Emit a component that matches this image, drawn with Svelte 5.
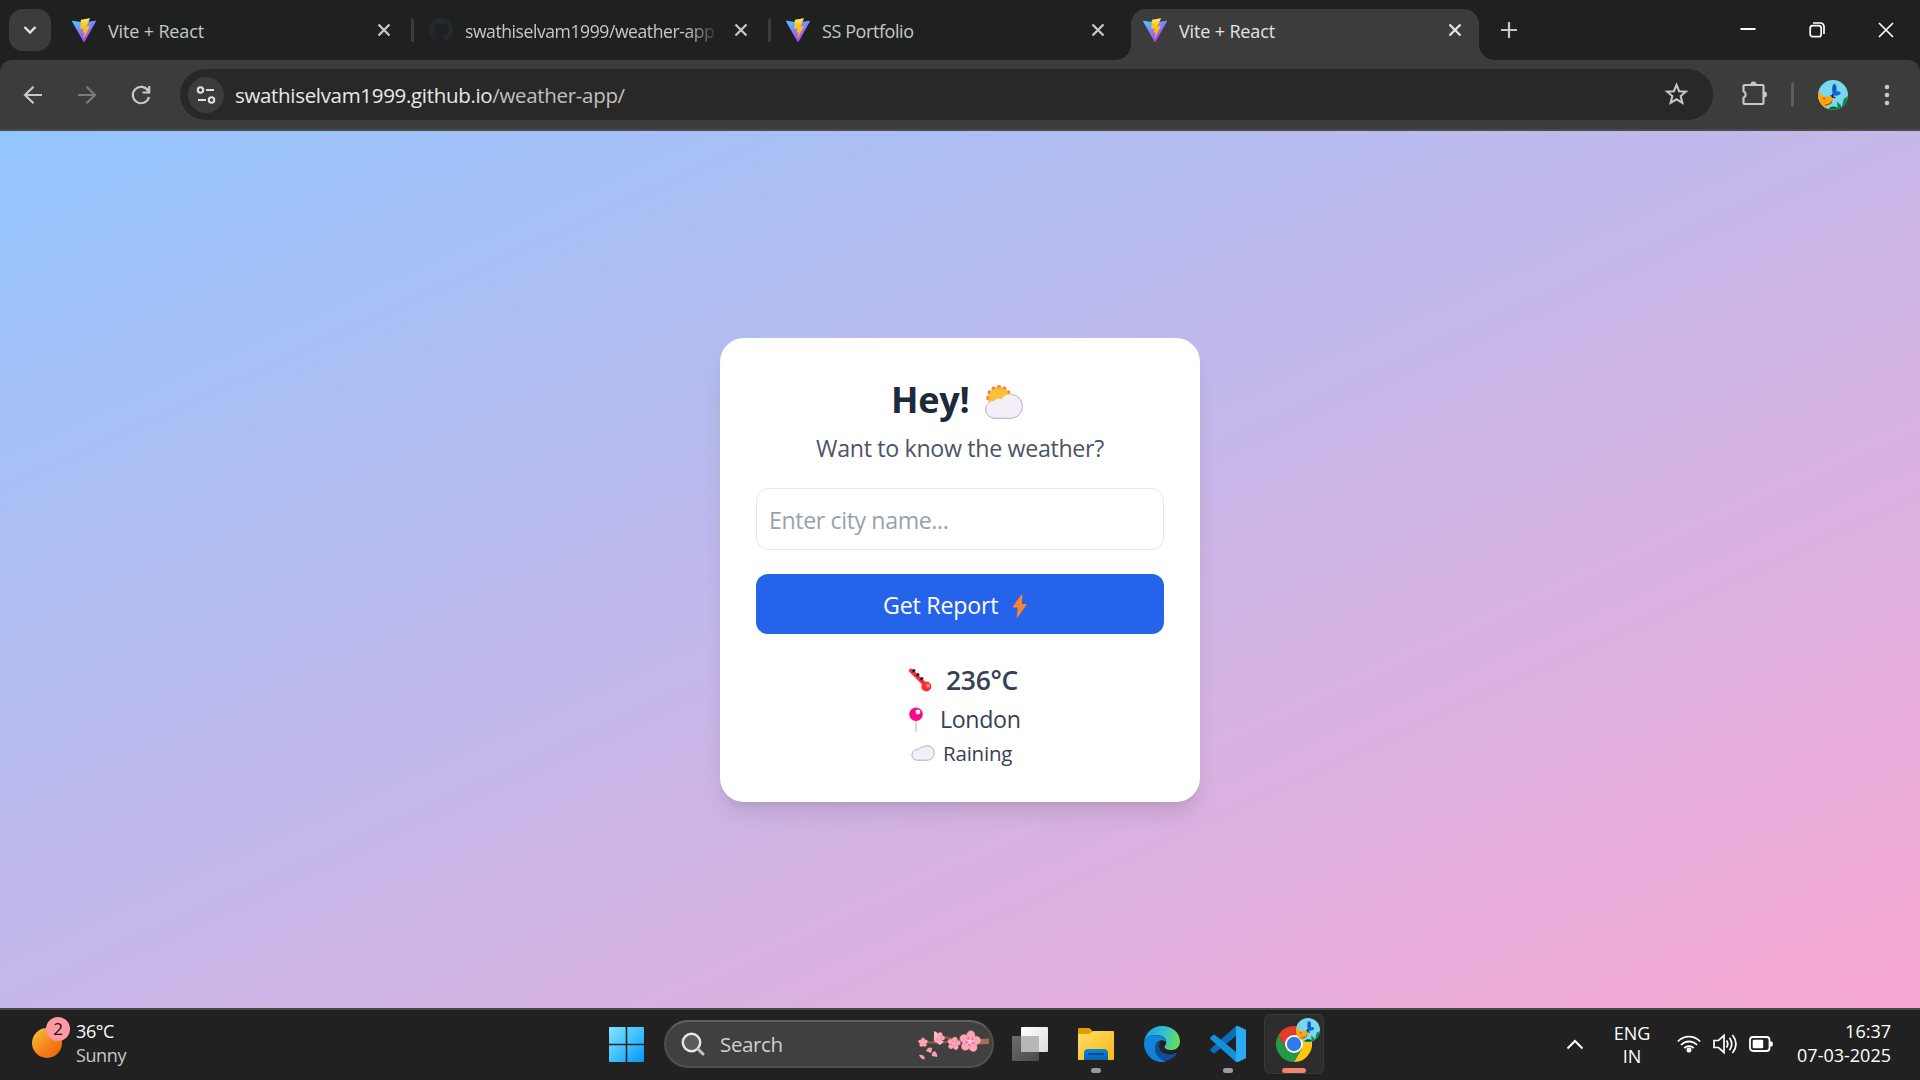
<script>
  let city = $state('');
  const tabs = [
    { title: 'Vite + React', icon: 'vite' },
    { title: 'swathiselvam1999/weather-app', icon: 'github' },
    { title: 'SS Portfolio', icon: 'vite' },
    { title: 'Vite + React', icon: 'vite', active: true }
  ];
  const petals = [0, 72, 144, 216, 288];
  const rays = [0, 30, 60, 90, 120, 150, 180, 210, 240, 270, 300, 330];
</script>

{#snippet vite()}
  <svg class="fav" viewBox="0 0 24 24">
    <defs>
      <linearGradient id="va" x1="0" y1="0" x2=".6" y2="1"><stop offset="0" stop-color="#41d1ff" /><stop offset="1" stop-color="#bd34fe" /></linearGradient>
      <linearGradient id="vb" x1="0" y1="0" x2="0" y2="1"><stop offset="0" stop-color="#ffea83" /><stop offset=".3" stop-color="#ffcb1f" /><stop offset="1" stop-color="#ffa800" /></linearGradient>
    </defs>
    <path fill="url(#va)" d="M23.9 3.6 12.6 23.7a.6.6 0 0 1-1.1 0L.1 3.6a.6.6 0 0 1 .7-.9L12 4.6l11.200-1.900a.6.6 0 0 1 .7.9z" />
    <path fill="url(#vb)" d="M17.500.2 9.100 1.800a.4.4 0 0 0-.3.3L8.300 10.700a.4.4 0 0 0 .4.400l2.300-.5a.4.4 0 0 1 .4.400l-.7 3.400a.4.4 0 0 0 .5.400l1.400-.4-1.100 5.300c-.1.4.4.5.6.2l5.600-11.300a.4.4 0 0 0-.4-.5l-2.400.5a.4.4 0 0 1-.4-.5L18 .6a.4.4 0 0 0-.5-.4z" />
  </svg>
{/snippet}

{#snippet blossom()}
  {#each petals as a}
    <ellipse cx="0" cy="-5.600" rx="4" ry="4.800" transform="rotate({a})" fill="#ffa6b4" stroke="#f58ca0" stroke-width=".5" />
  {/each}
  <circle r="4.500" fill="#ff7892" />
  {#each petals as a}
    <path d="M0 0V-4.500" transform="rotate({a})" stroke="#ffe3f3" stroke-width="1" />
  {/each}
  <circle r="1.600" fill="#e9c9ff" />
{/snippet}

{#snippet avatar()}
  <defs><clipPath id="av"><circle cx="15" cy="15" r="15" /></clipPath></defs>
  <g clip-path="url(#av)">
    <rect width="30" height="30" fill="#78d8ee" />
    <path d="M0 30V11.500l2 .5 1.500 3.500 4.500 1 6 0 1.500 3-2.500 4-4 2-1 5z" fill="#ffa50a" />
    <path d="M7 25q5 0 7-3.500" stroke="#8a4a10" stroke-width="1.200" fill="none" />
    <path d="M9.500 30q2-4 7-3.500l3 1-.5-6 4 4 .5 2 2.500-9 5-3v15z" fill="#0b8b45" />
    <path d="M12 29q3-3 6 0" stroke="#044d31" stroke-width="1.500" fill="none" />
    <path d="M15 15.500q-2.500-9 1-12 3.500 1 2.500 8 4.500-1 4 2.500-2.500 2.500-7.500 1.500z" fill="#1264d8" />
    <path d="M16 6q1.500 2 .5 5" stroke="#0a3fa0" fill="none" />
    <path d="m12.500 15.500 5 2.500m-3-4v4" stroke="#13284c" stroke-width="1.300" />
    <circle cx="6" cy="18.500" r=".8" fill="#3b3d50" />
  </g>
{/snippet}

<div class="screen">
  <header class="tabs">
    <button class="tabsearch" aria-label="Search tabs"><svg width="14" height="10" viewBox="0 0 14 10"><path d="m1.500 2 5.500 5.500L12.500 2" fill="none" stroke="#e3e3e3" stroke-width="2.400" /></svg></button>
    <div class="tablist">
      {#each tabs as tab, i}
        <div class="tab" class:active={tab.active} class:divided={i < 2}>
          {#if tab.icon === 'vite'}{@render vite()}{:else}
            <svg class="fav" viewBox="0 0 16 16"><path fill="#24292f" d="M8 0C3.580 0 0 3.580 0 8c0 3.540 2.290 6.530 5.470 7.590.4.070.55-.17.55-.38 0-.19-.01-.82-.01-1.490-2.010.37-2.530-.49-2.690-.94-.09-.23-.48-.94-.82-1.130-.28-.15-.68-.52-.01-.53.63-.01 1.080.58 1.230.82.72 1.210 1.870.87 2.330.66.07-.52.28-.87.51-1.070-1.780-.2-3.640-.89-3.640-3.950 0-.87.31-1.590.82-2.150-.08-.2-.36-1.020.08-2.120 0 0 .67-.21 2.200.82.64-.18 1.320-.27 2-.27s1.360.09 2 .27c1.530-1.040 2.200-.82 2.200-.82.44 1.100.16 1.920.08 2.120.51.56.82 1.270.82 2.150 0 3.070-1.870 3.750-3.650 3.950.29.25.54.73.54 1.480 0 1.070-.01 1.930-.01 2.200 0 .21.15.46.55.38A8.010 8.010 0 0 0 16 8c0-4.420-3.580-8-8-8z" /></svg>
          {/if}
          <span class="title" class:fade={i === 1} class:tight={i === 2}>{tab.title}</span>
          <svg class="close" viewBox="0 0 14 14"><path d="m1.500 1.500 11 11m0-11-11 11" stroke="currentColor" stroke-width="2.300" /></svg>
        </div>
      {/each}
    </div>
    <svg class="plus" viewBox="0 0 16 16"><path d="M8 0v16M0 8h16" stroke="#c7c7c7" stroke-width="2.200" /></svg>
    <div class="winctl">
      <svg viewBox="0 0 16 16"><path d="M.5 7h15" stroke="#fff" stroke-width="2" /></svg>
      <svg viewBox="0 0 16 16"><rect x="1.200" y="3.700" width="11" height="11" rx="2.500" fill="none" stroke="#fff" stroke-width="1.700" /><path d="M4 1h7.500a3.500 3.500 0 0 1 3.500 3.500v7.500" fill="none" stroke="#fff" stroke-width="1.700" /></svg>
      <svg viewBox="0 0 16 16"><path d="m1 1 14 14m0-14L1 15" stroke="#fff" stroke-width="1.700" /></svg>
    </div>
  </header>

  <nav class="toolbar">
    <svg class="nav" viewBox="0 0 24 24"><path d="M21 12H4.500m8-8.300L4 12l8.500 8.300" fill="none" stroke="#c7c7c7" stroke-width="2.200" /></svg>
    <svg class="nav" viewBox="0 0 24 24"><path d="M3 12h16.500m-8-8.300L20 12l-8.500 8.300" fill="none" stroke="#7b7b7b" stroke-width="2.200" /></svg>
    <svg class="nav" viewBox="0 0 24 24"><path d="M19.200 8A8.200 8.200 0 1 0 20 14M20.200 3v6.500h-6.700" fill="none" stroke="#c7c7c7" stroke-width="2.200" /></svg>
    <div class="omnibox">
      <span class="site"><svg width="20" height="20" viewBox="0 0 20 20" fill="none" stroke="#e0e0e0" stroke-width="2.100"><circle cx="4.500" cy="5" r="2.700" /><path d="M10 5h8M2 15h8" /><circle cx="15.500" cy="15" r="2.700" /></svg></span>
      <span class="url">swathiselvam1999.github.io<i>/weather-app/</i></span>
      <svg class="star" viewBox="0 0 24 24"><path d="m12 2.800 2.500 6 6.500.5-5 4.200 1.600 6.500-5.600-3.400L6.400 20 8 13.500 3 9.300l6.500-.5z" fill="none" stroke="#c7c7c7" stroke-width="2" /></svg>
    </div>
    <svg class="puzzle" viewBox="0 0 26 26"><path d="M3.500 5h18a1 1 0 0 1 1 1v17a1 1 0 0 1-1 1h-18a1 1 0 0 1-1-1v-5.200a3.600 3.600 0 0 0 0-6.600V6a1 1 0 0 1 1-1z" fill="none" stroke="#c7c7c7" stroke-width="2.200" /><path d="M9.500 4.500a3 3 0 0 1 6 0zM23 11.500a3 3 0 0 1 0 6z" fill="#c7c7c7" /></svg>
    <span class="bar"></span>
    <svg class="me" viewBox="0 0 30 30">{@render avatar()}</svg>
    <svg class="dots" viewBox="0 0 6 24" fill="#c7c7c7"><circle cx="3" cy="4" r="2.300" /><circle cx="3" cy="12" r="2.300" /><circle cx="3" cy="20" r="2.300" /></svg>
  </nav>

  <main>
    <section class="card">
      <h1><span>Hey!</span>
        <svg width="38" height="34" viewBox="0 0 38 34">
          {#each rays as a}
            <circle cx="14" cy="2.300" r="2.200" transform="rotate({a} 14 13)" fill="#ff822d" />
          {/each}
          <circle cx="14" cy="13" r="10.400" fill="#f9c23c" stroke="#ff9a33" stroke-width=".6" />
          <path d="M10 33.300a9.300 9.300 0 0 1-9.300-9.300c0-5 4-8.500 8.300-7.800 1.600-2.800 4.600-3.200 7-1.800 2.500-3.300 5.500-4.800 9-4.800 6.600 0 12.300 5.200 12.300 11.900S32 33.300 25.500 33.300z" fill="#f3eef8" /><path d="M1.800 19.500C.2 22 .2 26 1.800 28.800c1.700 2.900 4.700 4.500 8.200 4.500h15.500c6.500 0 11.800-5.200 11.800-11.800 0-6.700-5-11.900-11.300-11.900" fill="none" stroke="#b4acbc" stroke-width="1" /></svg>
      </h1>
      <p class="sub">Want to know the weather?</p>
      <input placeholder="Enter city name..." bind:value={city} />
      <button class="get"><span>Get Report</span><svg width="15" height="24" viewBox="0 0 15 24"><path d="M9.500.5 1 12.200c-.5.700-.2 1.300.5 1.300h4.200L4.800 23c0 .7.600.8 1 .3l8.400-12c.5-.7.1-1.300-.5-1.300H9.800L10.400.8c0-.6-.5-.8-.9-.3z" fill="#ff822d" /></svg></button>
      <div class="result">
        <p class="temp"><svg width="24" height="24" viewBox="0 0 24 24"><path d="m3 2.500 14 14" stroke="#f92f35" stroke-width="4" stroke-linecap="round" /><path d="m4.800 4 2-2.300M8.800 8l2-2.300M12.800 12l2-2.300" stroke="#201c20" stroke-width="2.600" /><circle cx="18.300" cy="18.500" r="5" fill="#f92f35" /><circle cx="20" cy="17.700" r="2" fill="#ff8687" /></svg><span>236°C</span></p>
        <p class="place"><svg width="14" height="25" viewBox="0 0 14 25"><path d="M7 12v12" stroke="#d3d3d3" stroke-width="1.800" stroke-linecap="round" /><circle cx="7" cy="7.200" r="6.800" fill="#f70a8d" /><circle cx="9" cy="5" r="2.400" fill="#fff" /></svg><span>London</span></p>
        <p class="sky"><svg width="24" height="16" viewBox="0 0 24 16"><path d="M6 15.200a5 5 0 0 1-5-5C1 6.500 4 4 7.200 4.300 8.500 2.600 10 2 11.800 2.300 13 1.200 14.500.7 16.400.7c3.800 0 6.800 3.200 6.800 7.200 0 4-3.200 7.300-7 7.300z" fill="#f3eef8" stroke="#b4acbc" stroke-width="1" /></svg><span>Raining</span></p>
      </div>
    </section>
  </main>

  <footer class="taskbar">
    <div class="weather">
      <div class="sun"><b>2</b></div>
      <div class="wtext"><span>36°C</span><span class="dim">Sunny</span></div>
    </div>
    <div class="apps">
      <svg class="win" width="35" height="35" viewBox="0 0 35 35"><defs><linearGradient id="wg" x1="0" y1="0" x2="35" y2="35" gradientUnits="userSpaceOnUse"><stop stop-color="#86e2ff" /><stop offset=".5" stop-color="#3fc3fb" /><stop offset="1" stop-color="#0a94fb" /></linearGradient></defs><path fill="url(#wg)" d="M1 0h15.700v16.700H0V1a1 1 0 0 1 1-1zM18.300 0H34a1 1 0 0 1 1 1v15.700H18.300zM0 18.300h16.700V35H1a1 1 0 0 1-1-1zM18.300 18.300H35V34a1 1 0 0 1-1 1H18.300z" /></svg>
      <div class="search">
        <svg width="24" height="24" viewBox="0 0 24 24"><circle cx="10.500" cy="10.500" r="8.700" fill="#5a5a5a" stroke="#e6e6e6" stroke-width="2.400" /><path d="m17 17 5 5" stroke="#c4c4c4" stroke-width="3" stroke-linecap="round" /></svg>
        <span>Search</span>
        <svg class="bloom" width="72" height="32" viewBox="0 0 72 32">
          <path d="M71 11.500 52 13 30 8 22 6M40 9 24 13 5 12" fill="none" stroke="#8f5e48" stroke-width="2" />
          <path d="M50 10 71 8.500v5.500l-21 1z" fill="#a66c5c" />
          <g transform="translate(5 12.500) scale(.46)">{@render blossom()}</g>
          <g transform="translate(21 8) rotate(20) scale(.56)">{@render blossom()}</g>
          <path d="M16 1q5 2 5 5l-5 4zM17 11l5 4 4-4z" fill="#ffb9c8" />
          <g transform="translate(36 13.500) rotate(10) scale(.64)">{@render blossom()}</g>
          <g transform="translate(52 11.500) rotate(8) scale(1.040)">{@render blossom()}</g>
          <path d="M1 25q5-1 6 4-4 1-6-4zM8 21q2-5 6-3 0 3-1 5zM14 26q-1-4 3-5 3 4 2 6z" fill="#ff9daf" />
        </svg>
      </div>
      <svg class="tv" width="36" height="34" viewBox="0 0 36 34"><defs><linearGradient id="t1" x1="0" y1="0" x2="1" y2="1"><stop stop-color="#fff" /><stop offset="1" stop-color="#dcdcdc" /></linearGradient><linearGradient id="t2" x1="0" y1="0" x2="1" y2="1"><stop stop-color="#6c6c6c" /><stop offset="1" stop-color="#4b4b4b" /></linearGradient></defs><rect y="9" width="27" height="25" rx="1" fill="url(#t2)" /><rect x="9" width="27" height="25" rx="1" fill="url(#t1)" /><path d="M9 9h18v16H9z" fill="#b7b7b7" /></svg>
      <div class="app"><svg width="36" height="36" viewBox="0 0 36 36"><defs><linearGradient id="f1" x1="0" y1="0" x2="1" y2="1"><stop stop-color="#ffdc6b" /><stop offset="1" stop-color="#fcb912" /></linearGradient><linearGradient id="f2" x1="0" y1="0" x2="0" y2="1"><stop stop-color="#0f84d9" /><stop offset="1" stop-color="#0a62b4" /></linearGradient></defs><path d="M0 3a1 1 0 0 1 1-1h9.500c1 0 1.500.4 2 1l3 3V12H0z" fill="#e19d00" /><path d="M0 9q0-1 1-1h9.500q1 0 2-1l1.500-1.300q.7-.7 2-.7h19a1 1 0 0 1 1 1v27a1 1 0 0 1-1 1H1a1 1 0 0 1-1-1z" fill="url(#f1)" /><path d="M6 34v-7a4 4 0 0 1 4-4h16a4 4 0 0 1 4 4v7z" fill="url(#f2)" /><path d="M11 28h14" stroke="#064b91" stroke-width="2" stroke-linecap="round" /></svg><i class="run"></i></div>
      <div class="app"><svg width="36" height="36" viewBox="0 0 36 36"><defs><linearGradient id="e1" x1="0" y1=".3" x2="1" y2=".5"><stop stop-color="#1b9de2" /><stop offset=".55" stop-color="#35c1d1" /><stop offset="1" stop-color="#67e052" /></linearGradient><linearGradient id="e2" x1="0" y1="0" x2=".3" y2="1"><stop stop-color="#1487d8" /><stop offset="1" stop-color="#1180dc" /></linearGradient><linearGradient id="e3" x1="0" y1="0" x2="1" y2="1"><stop stop-color="#0d4b8d" /><stop offset="1" stop-color="#104f9c" /></linearGradient></defs><path d="M0 17C.5 7 8.500 0 18 0c10.500 0 18 7 18 15.500 0 5-4 8.500-8.500 8.500-4.500 0-7-1.500-7-3 0-1 1.800-1.700 1.800-5C22.300 11.500 17 9 11.500 9 5 9 1 12.500 0 17z" fill="url(#e1)" /><path d="M0 17c1-5 5-8 11-8 6.500 0 11 3.500 11 7-2-2-4-2-6-1.500-4 1.500-5.500 5.500-4.500 10 1.200 6 6 10 11 10.500C20 36 18 36 16 36 7 35 0 27.500 0 17z" fill="url(#e2)" /><path d="M14.500 15.500c-4 3-4.500 9-1.500 13.500 2.500 4 6 6 9 6 4-1 8-3.500 10.500-7 .5-.8 0-1.300-.8-.9-1.700.8-3.700 1.400-6 1.400-6 0-10.700-4-10.700-8.500 0-1.800.5-3.500 1.500-5z" fill="url(#e3)" /></svg></div>
      <div class="app"><svg width="36" height="36" viewBox="0 0 36 36"><path d="M26 0 36 4v28l-10 4z" fill="#24a9f2" /><path d="M26 0v10L5 27q-1 .8-2 0l-2.400-2.200q-1-1 0-2z" fill="#0a6fb8" /><path d="M26 36V26L5 9q-1-.8-2 0L.6 11.200q-1 1 0 2z" fill="#1590db" /><path d="M26 0q1.500-.3 2 0l8 4v28l-8 4h-2q1 0 1-2V2q0-2-1-2z" fill="#2aacf5" /></svg><i class="run"></i></div>
      <div class="app current"><svg width="36" height="36" viewBox="0 0 36 36"><path d="M18 18 2.400 9A18 18 0 0 1 33.600 9z" fill="#e33b2e" /><path d="M18 9h15.600A18 18 0 0 1 18 36l7.800-13.500z" fill="#fdc70c" /><path d="M10.200 22.500 2.400 9A18 18 0 0 0 18 36l7.800-13.500z" fill="#239847" /><path d="M2.400 9 10.200 22.500 18 9z" fill="#e33b2e" /><circle cx="18" cy="18" r="9" fill="#fff" /><circle cx="18" cy="18" r="7.200" fill="#2f7bea" /></svg><svg class="mini" viewBox="0 0 30 30">{@render avatar()}</svg><i class="run wide"></i></div>
    </div>
    <div class="tray">
      <svg class="chev" width="18" height="11" viewBox="0 0 18 11"><path d="m1.500 9.500 7.500-7.500 7.500 7.500" fill="none" stroke="#fff" stroke-width="2" /></svg>
      <div class="lang"><span>ENG</span><span>IN</span></div>
      <div class="status">
        <svg viewBox="0 0 24 24" fill="none" stroke="#fff" stroke-width="1.800"><path d="M.8 9.500c6.200-6.500 16.200-6.500 22.400 0M4 13c4.500-4.700 11.500-4.700 16 0M7.300 16.200c2.600-2.900 6.800-2.900 9.400 0" /><circle cx="12" cy="18" r="1.600" fill="#fff" /></svg>
        <svg viewBox="0 0 24 24" fill="none" stroke="#fff" stroke-width="1.700"><path d="M1 8.500h4.500L11 3.500v17L5.500 15.500H1zM13.500 8.500q2.500 3.500 0 7M16.500 5.700q4.500 6.300 0 12.600M19.500 3q7 9 0 18" /></svg>
        <svg viewBox="0 0 24 24"><rect x="1" y="5" width="19.500" height="14" rx="3" fill="none" stroke="#fff" stroke-width="1.800" /><rect x="3.700" y="7.800" width="10.500" height="8.500" rx="1" fill="#fff" /><path d="M21 9.500h1.500q1.300 0 1.300 1.500v2q0 1.500-1.300 1.500H21z" fill="#fff" /></svg>
      </div>
      <div class="clock"><span>16:37</span><span>07-03-2025</span></div>
    </div>
  </footer>
</div>

<style>
  :global(body) { margin: 0; overflow: hidden; }
  .screen { width: 1920px; height: 1080px; display: flex; flex-direction: column; background: #1f2120; font-family: "Open Sans", "Noto Sans", sans-serif; overflow: hidden; }
  .screen, .screen * { box-sizing: border-box; }
  svg { display: block; flex: none; }
  button { font: inherit; border: 0; padding: 0; }
  p, h1 { margin: 0; }
  span { white-space: nowrap; }

  .tabs { height: 60px; display: flex; padding-left: 9px; flex: none; }
  .tabsearch { width: 42px; height: 42px; margin-top: 9px; border-radius: 14px; background: #3c3c3c; display: grid; place-items: center; }
  .tablist { display: flex; margin-left: 9px; }
  .tab { width: 357px; height: 60px; padding: 0 18px 0 12px; display: flex; align-items: center; color: #c7c7c7; position: relative; }
  .tab.divided::after { content: ""; position: absolute; right: 3px; top: 18px; width: 3px; height: 24px; border-radius: 2px; background: #3c3c3c; }
  .tab.active { width: 348px; height: 51px; margin-top: 9px; padding: 0 17px 9px 12px; background: #3c3c3c; border-radius: 15px 15px 0 0; color: #e3e3e3; }
  .tab.active::before, .tab.active::after { content: ""; position: absolute; bottom: 0; width: 15px; height: 15px; }
  .tab.active::before { left: -15px; background: radial-gradient(circle at 0 0, transparent 14.500px, #3c3c3c 15px); }
  .tab.active::after { right: -15px; background: radial-gradient(circle at 100% 0, transparent 14.500px, #3c3c3c 15px); }
  .fav { width: 24px; height: 24px; margin-right: 12px; }
  .title { font-size: 18px; line-height: 24px; width: 252px; flex: none; overflow: hidden; padding-top: 2px; letter-spacing: -.15px; }
  .title.tight { letter-spacing: -.42px; }
  .title.fade { font-size: 17.600px; letter-spacing: -.45px; -webkit-mask-image: linear-gradient(90deg, #000 222px, transparent 254px); mask-image: linear-gradient(90deg, #000 222px, transparent 254px); }
  .close { width: 14px; height: 14px; margin-left: 17px; }
  .plus { width: 16px; height: 16px; margin: 22px 0 0 22px; }
  .winctl { margin: 22px 26px 0 auto; display: flex; gap: 53px; }
  .winctl svg { width: 16px; height: 16px; }

  .toolbar { height: 71px; flex: none; background: #3c3c3c; border-bottom: 2px solid #4a4a4a; border-radius: 12px 12px 0 0; display: flex; align-items: center; padding: 0 0 0 21px; }
  .nav { width: 24px; height: 24px; margin-right: 30px; }
  .omnibox { width: 1533px; height: 51px; margin-left: -3px; border-radius: 26px; background: #282828; display: flex; align-items: center; padding: 0 24px 0 8px; }
  .site { width: 36px; height: 36px; border-radius: 50%; background: #3c3c3c; display: grid; place-items: center; }
  .url { font-size: 20.500px; line-height: 28px; margin-left: 11px; color: #e8e8e8; flex: 1; letter-spacing: -.32px; }
  .url i { font-style: normal; color: #c0c0c0; }
  .star { width: 25px; height: 27px; }
  .puzzle { width: 26px; height: 26px; margin: 0 24px 3px 28px; }
  .bar { width: 3px; height: 25px; border-radius: 2px; background: #5c5c5c; }
  .me { width: 30px; height: 30px; margin: 0 36px 0 24px; }
  .dots { width: 6px; height: 24px; }

  main { height: 877px; flex: none; background: linear-gradient(to bottom right, #93c5fd, #f9a8d4); display: flex; justify-content: center; padding-top: 207px; }
  .card { width: 480px; height: 464px; background: #fff; border-radius: 24px; padding: 36px; box-shadow: 0 15px 22px -4px rgba(0,0,0,.1), 0 6px 9px -6px rgba(0,0,0,.1); display: flex; flex-direction: column; }
  h1 { height: 54px; font-size: 36px; line-height: 52px; font-weight: 700; color: #1e2939; display: flex; padding-left: 135px; letter-spacing: -.3px; }
  h1 span { width: 77px; }
  h1 svg { margin: 11px 0 0 17px; }
  .sub { height: 36px; margin-top: 2px; line-height: 36px; font-size: 23.200px; color: #4a5565; text-align: center; letter-spacing: -.32px; }
  input { width: 408px; height: 62px; margin-top: 22px; border: 1px solid #e5e7eb; border-radius: 12px; padding: 2px 12px 0; font: inherit; font-size: 23.200px; color: #1e2939; outline: 0; background: #fff; letter-spacing: -.4px; }
  input::placeholder { color: #99a1af; opacity: 1; }
  .get { height: 60px; margin-top: 24px; border-radius: 12px; background: #2563eb; color: #fff; font-size: 23.200px; display: flex; padding: 0 0 0 127px; align-items: center; letter-spacing: -.2px; }
  .get span { padding-top: 2px; width: 114px; }
  .get svg { margin: 4px 0 0 15px; }
  .result { padding-top: 27px; color: #364153; }
  .result p { display: flex; align-items: center; }
  .temp { height: 38px; font-size: 26.500px; font-weight: 600; padding-left: 152px; letter-spacing: -.3px; }
  .temp span { margin: -1px 0 0 14px; }
  .place { height: 40px; font-size: 23.200px; padding-left: 153px; letter-spacing: -.35px; }
  .place span { margin-left: 17px; }
  .sky { height: 27px; font-size: 20.500px; padding-left: 155px; letter-spacing: -.2px; }
  .sky span { margin-left: 8px; }

  .taskbar { height: 72px; flex: none; background: #212121; border-top: 2px solid #474747; display: flex; color: #fff; font-size: 18px; line-height: 24px; }
  .weather { width: 609px; padding: 6px 0 0 32px; display: flex; }
  .sun { width: 30px; height: 30px; margin-top: 12px; border-radius: 50%; background: linear-gradient(135deg, #f4bd36 10%, #f5881c 50%, #ee5c08); position: relative; }
  .sun b { position: absolute; left: 14px; top: -11px; width: 24px; height: 24px; border-radius: 50%; background: #ff99a4; color: #111; font-weight: 400; font-size: 17px; line-height: 24px; text-align: center; }
  .wtext { display: flex; flex-direction: column; margin-left: 14px; padding-top: 3px; letter-spacing: -.4px; }
  .dim { color: #c8c8c8; }
  .apps { display: flex; height: 70px; align-items: center; }
  .win { margin-top: -1px; }
  .search { width: 330px; height: 48px; margin: -2px 18px 0 20px; border-radius: 24px; background: #404040; border: 2px solid #505050; border-top-color: #606060; display: flex; align-items: center; padding-left: 15px; }
  .search span { font-size: 20.500px; margin-left: 15px; width: 198px; color: #d0d0d0; letter-spacing: -.35px; }
  .bloom { margin: 4px 0 0; }
  .tv { margin-right: 18px; margin-top: -2px; }
  .app { width: 60px; height: 60px; margin-right: 6px; margin-top: -2px; display: grid; place-items: center; position: relative; border-radius: 6px; }
  .app.current { background: #2d2d2d; border: 1.500px solid #393939; }
  .run { position: absolute; bottom: 1px; left: calc(50% - 5px); width: 10px; height: 5px; border-radius: 3px; background: #9b9b9b; }
  .run.wide { width: 24px; left: calc(50% - 12px); background: #f4836b; bottom: 0; }
  .mini { position: absolute; left: 31px; top: 3px; width: 24px; height: 24px; }
  .tray { margin-left: auto; display: flex; align-items: center; padding: 0 29px 2px 0; }
  .lang { display: flex; flex-direction: column; align-items: center; width: 50px; margin: 1px 0 0 23px; line-height: 23px; }
  .status { display: flex; gap: 12px; margin-left: 20px; }
  .status svg { width: 24px; height: 24px; }
  .clock { display: flex; flex-direction: column; align-items: flex-end; width: 118px; margin-top: -2px; }
</style>
